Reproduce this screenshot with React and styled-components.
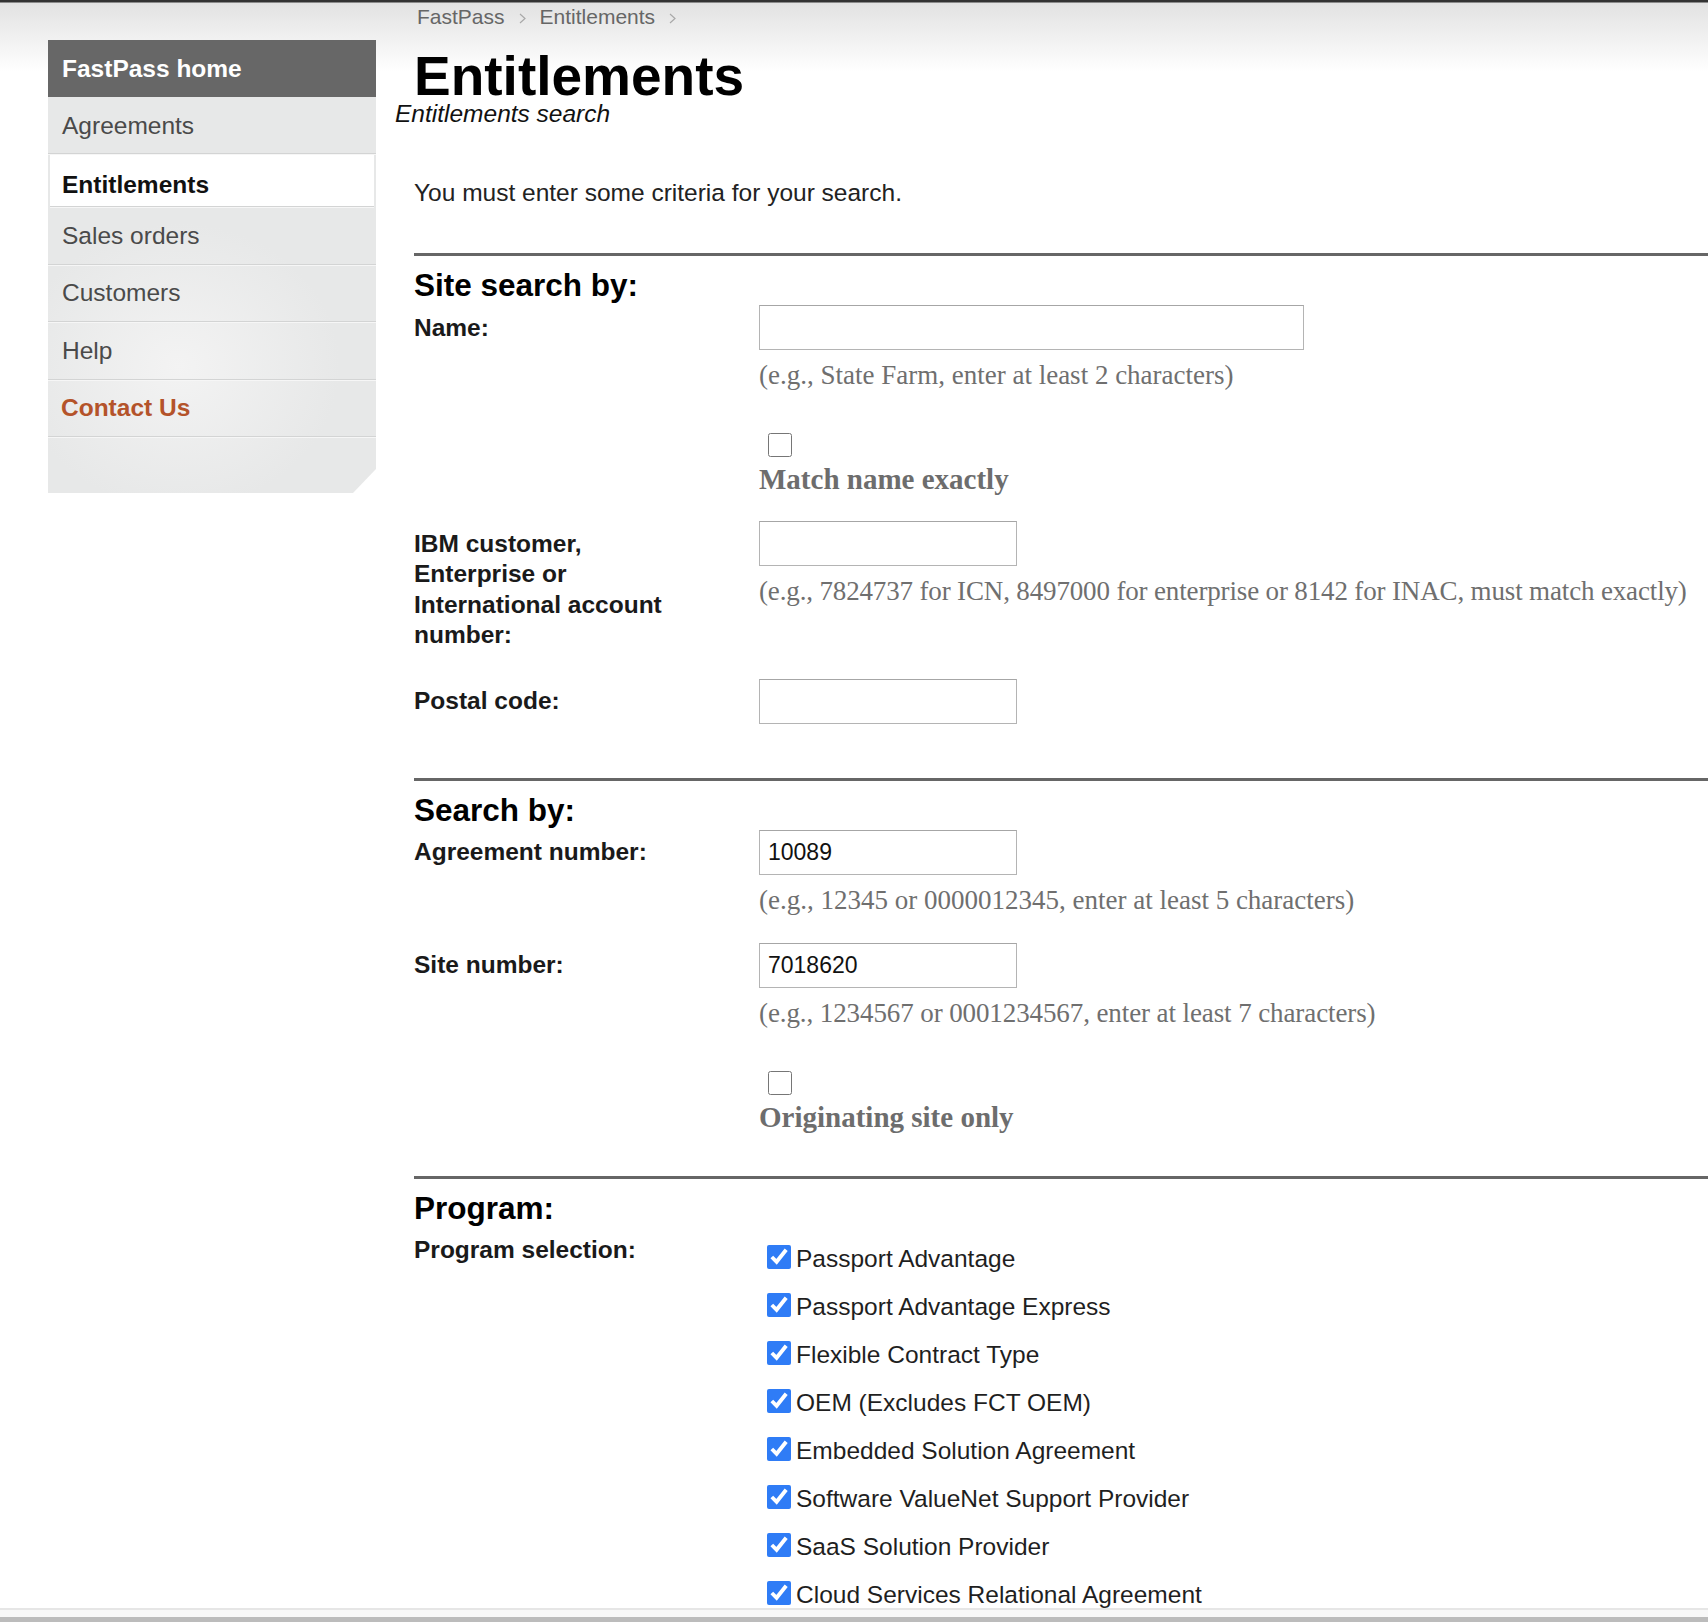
import React from "react";
import styled, { createGlobalStyle } from "styled-components";

const GlobalStyle = createGlobalStyle`
  html, body { margin: 0; padding: 0; }
  body {
    font-family: "Liberation Sans", Arial, Helvetica, sans-serif;
    color: #1a1a1a;
    background: #fff linear-gradient(to bottom, #333 0, #333 2px, #e2e2e2 3px, #fff 72px) no-repeat;
    background-size: 100% 80px;
  }
`;

const Page = styled.div`
  display: flex;
  align-items: flex-start;
  min-height: 1622px;
`;

const Sidebar = styled.nav`
  flex: 0 0 328px;
  margin: 40px 38px 0 48px;
  display: flex;
  flex-direction: column;
  background: radial-gradient(ellipse 70% 45% at 40% 72%, #f3f3f3 0%, #e7e8e8 70%);
  clip-path: polygon(0 0, 100% 0, 100% calc(100% - 24px), calc(100% - 23px) 100%, 0 100%);
`;

const NavHead = styled.div`
  height: 57px;
  display: flex;
  align-items: center;
  padding-left: 14px;
  background: #676767;
  color: #fff;
  font-size: 24.5px;
  font-weight: bold;
`;

const NavItem = styled.div`
  height: ${(p) => (p.$active ? "42px" : p.$h || "55px")};
  display: flex;
  align-items: center;
  padding-top: ${(p) => (p.$active ? "9px" : p.$pt || "0")};
  padding-left: ${(p) => (p.$accent ? "13px" : p.$active ? "12px" : "14px")};
  margin: ${(p) => (p.$active ? "1px 2px" : "0")};
  background: ${(p) => (p.$active ? "#fff" : "transparent")};
  border-bottom: 1px solid #d3d4d4;
  box-shadow: 0 1px 0 #f6f6f6;
  font-size: 24.5px;
  font-weight: ${(p) => (p.$active || p.$accent ? "bold" : "normal")};
  color: ${(p) => (p.$accent ? "#b4532a" : p.$active ? "#111" : "#4a4a4a")};
`;

const NavFill = styled.div`
  height: 56px;
`;

const Main = styled.main`
  flex: 1;
  min-width: 0;
`;

const Breadcrumb = styled.div`
  display: flex;
  align-items: center;
  height: 34px;
  margin-left: 3px;
  font-size: 21px;
  color: #666;
`;

const Crumb = styled.span`
  color: #666;
`;

const Chevron = styled.svg`
  width: 7px;
  height: 11px;
  margin: 3px 14px 0;
`;

const Title = styled.h1`
  margin: 18px 0 0;
  font-size: 55px;
  line-height: 48px;
  font-weight: bold;
  color: #000;
`;

const Subtitle = styled.div`
  margin: 0 0 0 -19px;
  font-size: 24.5px;
  line-height: 28px;
  font-style: italic;
  color: #111;
`;

const Intro = styled.p`
  margin: 51px 0 0;
  font-size: 24.5px;
  line-height: 28px;
  color: #222;
`;

const Section = styled.section`
  margin-top: ${(p) => p.$mt || "0"};
  border-top: 3px solid #666;
  padding: 11px 0 ${(p) => p.$pb || "44px"};
`;

const SectionTitle = styled.h2`
  margin: 0 0 2px;
  font-size: 31.5px;
  line-height: 36px;
  font-weight: bold;
  color: #000;
`;

const Rows = styled.div`
  display: flex;
  flex-direction: column;
  gap: 28px;
`;

const FieldRow = styled.div`
  display: grid;
  grid-template-columns: 345px 1fr;
  align-items: start;
`;

const Label = styled.label`
  display: block;
  max-width: 265px;
  padding-top: 7.5px;
  font-size: 24.5px;
  line-height: 30.5px;
  font-weight: bold;
  color: #1a1a1a;
`;

const Field = styled.div`
  display: flex;
  flex-direction: column;
  align-items: flex-start;
`;

const TextInput = styled.input`
  box-sizing: border-box;
  width: ${(p) => p.$w || "258px"};
  height: 45px;
  margin: 0;
  padding: 0 8px;
  border: 1px solid #b4b4b4;
  border-top-color: #a6a6a6;
  border-radius: 0;
  background: #fff;
  font-family: "Liberation Sans", Arial, sans-serif;
  font-size: 23px;
  color: #111;
  outline: none;
`;

const Hint = styled.div`
  margin-top: 10px;
  font-family: "Liberation Serif", "Times New Roman", serif;
  font-size: 27px;
  line-height: 30px;
  color: #6f6f6f;
  white-space: nowrap;
  letter-spacing: ${(p) => p.$ls || "normal"};
`;

const Check = styled.input.attrs({ type: "checkbox" })`
  width: 24px;
  height: 24px;
  margin: 0;
  accent-color: #2f7cf6;
  flex: 0 0 auto;
`;

const StackedOption = styled.div`
  display: flex;
  flex-direction: column;
  align-items: flex-start;
  margin-top: 43px;
  padding-left: 9px;
`;

const OptionText = styled.span`
  margin: 8px 0 0 -9px;
  font-family: "Liberation Serif", "Times New Roman", serif;
  font-size: 29px;
  line-height: 28px;
  font-weight: bold;
  color: #6d6d6d;
`;

const CheckList = styled.div`
  display: flex;
  flex-direction: column;
  margin-top: 5px;
`;

const CheckItem = styled.label`
  display: flex;
  align-items: center;
  height: 48px;
  padding-left: 8px;
  gap: 5px;
  font-size: 24.5px;
  color: #1f1f1f;
`;

const CheckLabel = styled.span`
  padding-top: 4px;
`;

const WindowEdge = styled.div`
  position: fixed;
  left: 0;
  right: 0;
  bottom: 0;
  height: 14px;
  background: linear-gradient(to bottom, #e6e6e6 0 2px, #f8f8f8 2px 9px, #bcbcbc 9px 14px);
`;

const ChevronIcon = () => (
  <Chevron viewBox="0 0 7 11">
    <polyline points="1,1 6,5.5 1,10" fill="none" stroke="#a8a8a8" strokeWidth="1.2" />
  </Chevron>
);

const navItems = [
  { label: "Agreements", h: "55px", pt: "1px" },
  { label: "Entitlements", active: true },
  { label: "Sales orders", h: "56px" },
  { label: "Customers", h: "56px" },
  { label: "Help", h: "57px" },
  { label: "Contact Us", accent: true, h: "56px" },
];

const programs = [
  "Passport Advantage",
  "Passport Advantage Express",
  "Flexible Contract Type",
  "OEM (Excludes FCT OEM)",
  "Embedded Solution Agreement",
  "Software ValueNet Support Provider",
  "SaaS Solution Provider",
  "Cloud Services Relational Agreement",
];

export default function App() {
  return (
    <>
      <GlobalStyle />
      <Page>
        <Sidebar>
          <NavHead>FastPass home</NavHead>
          {navItems.map((n) => (
            <NavItem key={n.label} $active={n.active} $accent={n.accent} $h={n.h} $pt={n.pt}>
              {n.label}
            </NavItem>
          ))}
          <NavFill />
        </Sidebar>
        <Main>
          <Breadcrumb>
            <Crumb>FastPass</Crumb>
            <ChevronIcon />
            <Crumb>Entitlements</Crumb>
            <ChevronIcon />
          </Breadcrumb>
          <Title>Entitlements</Title>
          <Subtitle>Entitlements search</Subtitle>
          <Intro>You must enter some criteria for your search.</Intro>

          <Section $mt="46px" $pb="54px">
            <SectionTitle>Site search by:</SectionTitle>
            <Rows>
              <FieldRow>
                <Label>Name:</Label>
                <Field>
                  <TextInput $w="545px" />
                  <Hint>(e.g., State Farm, enter at least 2 characters)</Hint>
                  <StackedOption>
                    <Check />
                    <OptionText>Match name exactly</OptionText>
                  </StackedOption>
                </Field>
              </FieldRow>
              <FieldRow>
                <Label>IBM customer, Enterprise or International account number:</Label>
                <Field>
                  <TextInput />
                  <Hint $ls="-0.15px">
                    (e.g., 7824737 for ICN, 8497000 for enterprise or 8142 for INAC, must match exactly)
                  </Hint>
                </Field>
              </FieldRow>
              <FieldRow>
                <Label>Postal code:</Label>
                <Field>
                  <TextInput />
                </Field>
              </FieldRow>
            </Rows>
          </Section>

          <Section $pb="45px">
            <SectionTitle>Search by:</SectionTitle>
            <Rows>
              <FieldRow>
                <Label>Agreement number:</Label>
                <Field>
                  <TextInput defaultValue="10089" />
                  <Hint>(e.g., 12345 or 0000012345, enter at least 5 characters)</Hint>
                </Field>
              </FieldRow>
              <FieldRow>
                <Label>Site number:</Label>
                <Field>
                  <TextInput defaultValue="7018620" />
                  <Hint $ls="-0.1px">(e.g., 1234567 or 0001234567, enter at least 7 characters)</Hint>
                  <StackedOption>
                    <Check />
                    <OptionText>Originating site only</OptionText>
                  </StackedOption>
                </Field>
              </FieldRow>
            </Rows>
          </Section>

          <Section $pb="0">
            <SectionTitle>Program:</SectionTitle>
            <FieldRow>
              <Label>Program selection:</Label>
              <CheckList>
                {programs.map((p) => (
                  <CheckItem key={p}>
                    <Check defaultChecked />
                    <CheckLabel>{p}</CheckLabel>
                  </CheckItem>
                ))}
              </CheckList>
            </FieldRow>
          </Section>
        </Main>
      </Page>
      <WindowEdge />
    </>
  );
}
